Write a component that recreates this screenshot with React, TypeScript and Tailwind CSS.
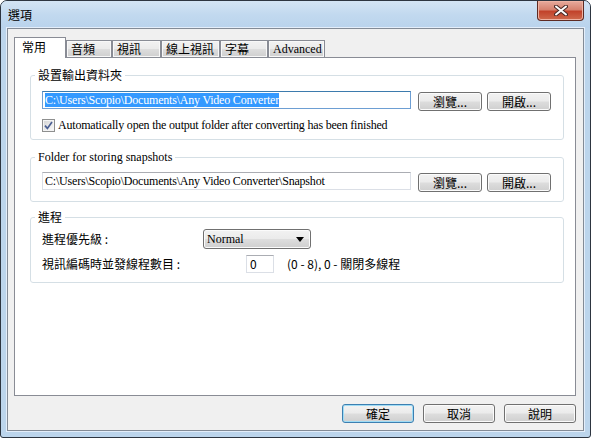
const cjk = "font-['Noto_Sans_CJK_TC','Noto_Sans_CJK_JP',sans-serif]";
const serif = "font-['Liberation_Serif','Noto_Sans_CJK_TC',serif]";
const face =
  "bg-[linear-gradient(to_bottom,#f2f2f2_0%,#ebebeb_48%,#dddddd_52%,#cfcfcf_100%)]";

type BtnProps = { label: string; className?: string; primary?: boolean };

const Button = ({ label, className = "", primary = false }: BtnProps) => (
  <div
    className={`flex h-[19px] items-center justify-center rounded-[3px] border text-[12px] leading-[14px] text-black ${cjk} ${face} ${
      primary
        ? "border-[#3c7fb1] shadow-[inset_0_0_0_1px_#9fdcf5]"
        : "border-[#707070] shadow-[inset_0_0_0_1px_#fbfbfb]"
    } ${className}`}
  >
    {label}
  </div>
);

const CheckBox = () => (
  <svg width="13" height="13" viewBox="0 0 13 13">
    <defs>
      <linearGradient id="cb" x1="0" y1="0" x2="1" y2="1">
        <stop offset="0" stopColor="#d6d6d6" />
        <stop offset="1" stopColor="#f8f8f8" />
      </linearGradient>
    </defs>
    <rect x="0.5" y="0.5" width="12" height="12" fill="#f4f4f4" stroke="#8e8f8f" />
    <rect x="2" y="2" width="9" height="9" fill="url(#cb)" />
    <path d="M3 6.6 L5.4 9.4 L10 3" fill="none" stroke="#4a5e92" strokeWidth="1.7" />
  </svg>
);

const tabs = [
  { label: "常用", w: "w-[52px]", font: cjk, selected: true },
  { label: "音頻", w: "w-[46px]", font: cjk, selected: false },
  { label: "視訊", w: "w-[49px]", font: cjk, selected: false },
  { label: "線上視訊", w: "w-[59px]", font: cjk, selected: false },
  { label: "字幕", w: "w-[48px]", font: cjk, selected: false },
  { label: "Advanced", w: "w-[57px]", font: serif, selected: false },
];

const Legend = ({ text, font }: { text: string; font: string }) => (
  <legend className={`ml-[4px] px-[3px] text-[12px] leading-[14px] text-black ${font}`}>{text}</legend>
);

export default function App() {
  return (
    <div className="flex h-[438px] w-[591px] flex-col overflow-hidden rounded-t-[7px] rounded-b-[3px] border border-[#2d3540] bg-[#bcd5ec]">
      {/* title bar */}
      <div className="flex h-[27px] items-center bg-[linear-gradient(to_bottom,#d3e4f4_0%,#c2d9ef_50%,#b9d3ec_100%)]">
        <div className={`pl-[7px] text-[12px] leading-[14px] text-black ${cjk}`}>選項</div>
        <div className="mr-[6px] ml-auto flex h-[20px] w-[47px] items-center justify-center self-start rounded-b-[4px] border border-t-0 border-[#5e2a22] bg-[linear-gradient(to_bottom,#e7ab9d_0%,#d6826f_45%,#c2432b_55%,#cf6a4d_100%)] shadow-[inset_0_0_0_1px_#eeb3a3]">
          <svg width="14" height="11" viewBox="0 0 14 11">
            <path d="M2 1.5 L12 9.5 M12 1.5 L2 9.5" stroke="#4a2a26" strokeWidth="4" strokeLinecap="round" />
            <path d="M2 1.5 L12 9.5 M12 1.5 L2 9.5" stroke="#ffffff" strokeWidth="2" strokeLinecap="round" />
          </svg>
        </div>
      </div>

      {/* client area */}
      <div className="mx-[6px] h-[403px] border border-[#838b96] bg-[#f0f0f0] pt-[8px] pl-[6px] shadow-[0_0_0_1px_#e4eefa]">
        {/* tab strip */}
        <div className="flex items-end">
          {tabs.map((t) =>
            t.selected ? (
              <div
                key={t.label}
                className={`relative z-10 -mb-px flex h-[21px] items-center border border-b-0 border-[#898c95] bg-white pb-[3px] pl-[7px] text-[12px] leading-[14px] text-black ${t.w} ${t.font}`}
              >
                {t.label}
              </div>
            ) : (
              <div
                key={t.label}
                className={`flex h-[17px] items-center border border-b-0 border-[#898c95] pl-[4px] text-[12px] leading-[14px] text-black shadow-[inset_0_0_0_1px_#f8f8f8] ${face} ${t.w} ${t.font}`}
              >
                {t.label}
              </div>
            )
          )}
        </div>

        {/* tab page */}
        <div className="flex h-[339px] w-[562px] flex-col border border-[#898c95] bg-white pt-[10px] pl-[15px]">
          <fieldset className="w-[534px] rounded-[3px] border border-[#d5dfe5] pb-[7px]">
            <Legend text="設置輸出資料夾" font={cjk} />
            <div className="pl-[11px]">
              <div className="mt-[9px] flex items-start">
                <div className="flex h-[18px] w-[369px] items-center border border-[#6d9ed3] border-t-[#3d7bad] bg-white pl-[2px]">
                  <span className={`bg-[#3399ff] text-[12px] leading-[14px] tracking-[-0.2px] text-white ${serif}`}>
                    C:\Users\Scopio\Documents\Any Video Converter
                  </span>
                </div>
                <Button label="瀏覽..." className="mt-px ml-[7px] w-[64px]" />
                <Button label="開啟..." className="mt-px ml-[5px] w-[64px]" />
              </div>
              <div className="mt-[8px] flex h-[13px] items-center gap-[3px]">
                <CheckBox />
                <span className={`text-[12px] leading-[13px] tracking-[-0.2px] text-black ${serif}`}>
                  Automatically open the output folder after converting has been finished
                </span>
              </div>
            </div>
          </fieldset>

          <fieldset className="mt-[10px] w-[534px] rounded-[3px] border border-[#d5dfe5] pb-[9px]">
            <Legend text="Folder for storing snapshots" font={serif} />
            <div className="mt-[8px] flex items-start pl-[11px]">
              <div className="flex h-[18px] w-[369px] items-center border border-[#dbdfe6] border-t-[#abadb3] bg-white pl-[2px]">
                <span className={`text-[12px] leading-[14px] tracking-[-0.2px] text-black ${serif}`}>
                  C:\Users\Scopio\Documents\Any Video Converter\Snapshot
                </span>
              </div>
              <Button label="瀏覽..." className="mt-px ml-[7px] w-[64px]" />
              <Button label="開啟..." className="mt-px ml-[5px] w-[64px]" />
            </div>
          </fieldset>

          <fieldset className="mt-[8px] w-[534px] rounded-[3px] border border-[#d5dfe5] pb-[9px]">
            <Legend text="進程" font={cjk} />
            <div className="pl-[11px]">
              <div className="mt-[5px] flex items-center">
                <div className={`w-[161px] text-[12px] leading-[14px] text-black ${cjk}`}>進程優先級 :</div>
                <div
                  className={`flex h-[20px] w-[108px] items-center justify-between rounded-[3px] border border-[#707070] pr-[6px] pl-[3px] shadow-[inset_0_0_0_1px_#fbfbfb] ${face}`}
                >
                  <span className={`text-[12px] leading-[14px] text-black ${serif}`}>Normal</span>
                  <svg width="8" height="5" viewBox="0 0 8 5">
                    <path d="M0 0 H8 L4 5 Z" fill="#000" />
                  </svg>
                </div>
              </div>
              <div className="mt-[6px] flex items-center">
                <div className={`w-[204px] text-[12px] leading-[14px] text-black ${cjk}`}>視訊編碼時並發線程數目 :</div>
                <div className="flex h-[18px] w-[28px] items-center border border-[#dbdfe6] border-t-[#abadb3] bg-white pl-[3px]">
                  <span className={`text-[12px] leading-[14px] text-black ${cjk}`}>0</span>
                </div>
                <span className={`ml-[13px] text-[12px] leading-[14px] text-black ${cjk}`}>(0 - 8), 0 - 關閉多線程</span>
              </div>
            </div>
          </fieldset>
        </div>

        {/* dialog buttons */}
        <div className="mt-[8px] flex w-[562px] justify-end gap-[9px]">
          <Button label="確定" primary className="w-[72px]" />
          <Button label="取消" className="w-[72px]" />
          <Button label="說明" className="w-[72px]" />
        </div>
      </div>
    </div>
  );
}
